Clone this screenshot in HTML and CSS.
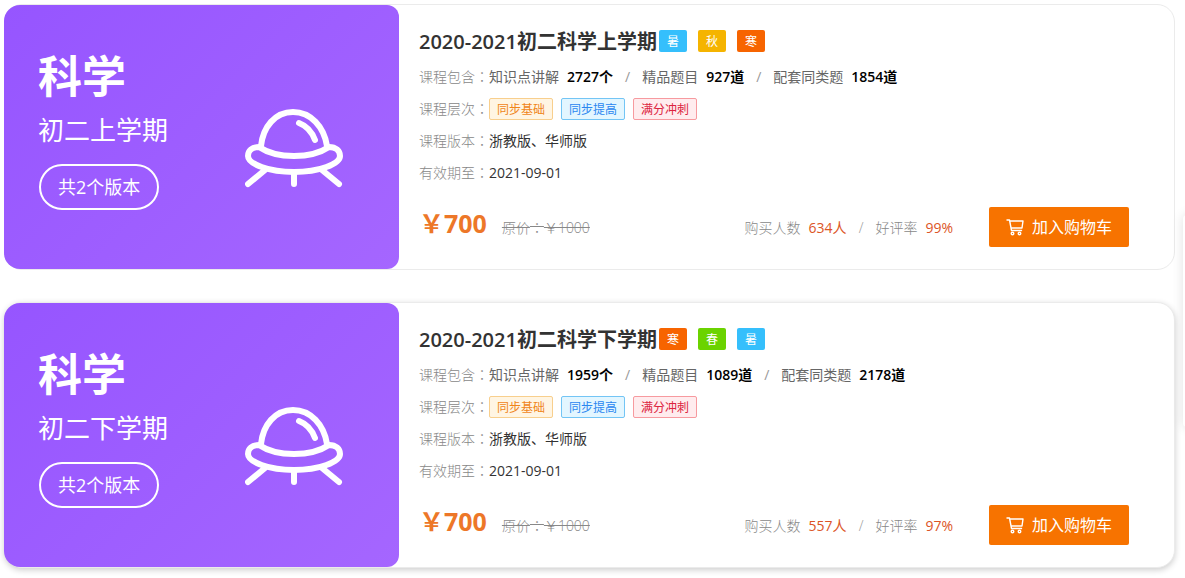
FILE: index.html
```html
<!DOCTYPE html>
<html lang="zh-CN">
<head>
<meta charset="utf-8">
<title>初二科学课程</title>
<link rel="stylesheet" href="styles.css">
</head>
<body>
<svg class="sprite" aria-hidden="true">
  <symbol id="ufo" viewBox="0 0 98 80">
    <g fill="none" stroke="currentColor" stroke-width="6" stroke-linecap="round" stroke-linejoin="round">
      <path d="M16 37C18 18 30 3 48 3S79 18 82 37"/>
      <path d="M14 38C32 50 66 50 84 38C91 38 95 42 95 47C95 55 74 63 49 63S3 55 3 47C3 42 7 38 14 38Z"/>
      <path d="M54 14C62 17 67 23 70 31M20 61L3 75M49 63V75M77 61L94 75"/>
    </g>
  </symbol>
  <symbol id="cart" viewBox="0 0 18 17">
    <g fill="none" stroke="currentColor" stroke-width="1.4" stroke-linecap="round" stroke-linejoin="round">
      <path d="M1 1H3.5L5.5 11.5H15.5M4 2H17L16 9H5.5"/>
      <circle cx="6.5" cy="14.5" r="1.3"/>
      <circle cx="13.5" cy="14.5" r="1.3"/>
    </g>
  </symbol>
</svg>
<main class="courses">
  <article class="card">
    <div class="cover">
      <div class="cover-text">
        <strong class="subject">科学</strong>
        <span class="term">初二上学期</span>
        <span class="versions">共2个版本</span>
      </div>
      <svg class="ufo" aria-hidden="true"><use href="#ufo"/></svg>
    </div>
    <div class="detail">
      <div class="heading">
        <h2><span class="years">2020-2021</span>初二科学上学期</h2>
        <div class="seasons"><span class="season summer">暑</span><span class="season autumn">秋</span><span class="season winter">寒</span></div>
      </div>
      <dl class="facts">
        <div class="fact"><dt>课程包含<i lang="zh-TW">：</i></dt><dd class="counts"><span>知识点讲解<b>2727个</b></span><em>/</em><span>精品题目<b>927道</b></span><em>/</em><span>配套同类题<b>1854道</b></span></dd></div>
        <div class="fact"><dt>课程层次<i lang="zh-TW">：</i></dt><dd class="levels"><span class="level basic">同步基础</span><span class="level improve">同步提高</span><span class="level sprint">满分冲刺</span></dd></div>
        <div class="fact"><dt>课程版本<i lang="zh-TW">：</i></dt><dd>浙教版、华师版</dd></div>
        <div class="fact"><dt>有效期至<i lang="zh-TW">：</i></dt><dd>2021-09-01</dd></div>
      </dl>
      <div class="purchase">
        <strong class="price">￥700</strong>
        <del>原价<i lang="zh-TW">：</i>￥1000</del>
        <div class="stats"><span>购买人数<b>634人</b></span><em>/</em><span>好评率<b>99%</b></span></div>
        <button class="add" type="button"><svg class="cart" aria-hidden="true"><use href="#cart"/></svg>加入购物车</button>
      </div>
    </div>
  </article>
  <article class="card raised">
    <div class="cover">
      <div class="cover-text">
        <strong class="subject">科学</strong>
        <span class="term">初二下学期</span>
        <span class="versions">共2个版本</span>
      </div>
      <svg class="ufo" aria-hidden="true"><use href="#ufo"/></svg>
    </div>
    <div class="detail">
      <div class="heading">
        <h2><span class="years">2020-2021</span>初二科学下学期</h2>
        <div class="seasons"><span class="season winter">寒</span><span class="season spring">春</span><span class="season summer">暑</span></div>
      </div>
      <dl class="facts">
        <div class="fact"><dt>课程包含<i lang="zh-TW">：</i></dt><dd class="counts"><span>知识点讲解<b>1959个</b></span><em>/</em><span>精品题目<b>1089道</b></span><em>/</em><span>配套同类题<b>2178道</b></span></dd></div>
        <div class="fact"><dt>课程层次<i lang="zh-TW">：</i></dt><dd class="levels"><span class="level basic">同步基础</span><span class="level improve">同步提高</span><span class="level sprint">满分冲刺</span></dd></div>
        <div class="fact"><dt>课程版本<i lang="zh-TW">：</i></dt><dd>浙教版、华师版</dd></div>
        <div class="fact"><dt>有效期至<i lang="zh-TW">：</i></dt><dd>2021-09-01</dd></div>
      </dl>
      <div class="purchase">
        <strong class="price">￥700</strong>
        <del>原价<i lang="zh-TW">：</i>￥1000</del>
        <div class="stats"><span>购买人数<b>557人</b></span><em>/</em><span>好评率<b>97%</b></span></div>
        <button class="add" type="button"><svg class="cart" aria-hidden="true"><use href="#cart"/></svg>加入购物车</button>
      </div>
    </div>
  </article>
</main>
<aside class="dock" aria-hidden="true"></aside>
</body>
</html>
```
FILE: styles.css
```css
* { box-sizing: border-box; }
body {
  margin: 0;
  background: #fff;
  color: #333;
  font: 14px/32px "Open Sans", "Noto Sans CJK SC", sans-serif;
  overflow: hidden;
}
.sprite { display: none; }
i, em { font-style: normal; }
i { font-family: "Noto Sans CJK TC", sans-serif; line-height: 1; }
.courses {
  display: flex;
  flex-direction: column;
  gap: 32px;
  padding: 4px 10px 10px 4px;
}
.card {
  display: flex;
  border: 1px solid #ebebeb;
  border-radius: 18px;
  background: #fff;
}
.raised { box-shadow: 0 2px 6px rgba(0, 0, 0, .2); }
.cover {
  display: flex;
  flex: 0 0 395px;
  align-items: center;
  justify-content: space-between;
  margin-left: -1px;
  padding: 0 56px 0 34px;
  border-radius: 16px 12px 12px 16px;
  background: linear-gradient(135deg, #9655ff, #a566ff);
  color: #fff;
}
.cover-text {
  display: flex;
  flex-direction: column;
  align-items: flex-start;
  padding-bottom: 18px;
}
.subject { margin-bottom: 2px; font-size: 44px; line-height: 60px; }
.term { font-size: 26px; line-height: 44px; }
.versions {
  margin: 12px 0 0 1px;
  padding: 0 17px;
  border: 2px solid #fff;
  border-radius: 23px;
  font-size: 18px;
  line-height: 42px;
}
.ufo { width: 98px; height: 80px; margin-top: 24px; }
.detail { flex: 1; padding: 20px 45px 22px 20px; }
.heading { display: flex; align-items: center; gap: 2px; }
h2 { margin: 0; padding-top: 2px; font-size: 20px; font-weight: 700; line-height: 30px; }
.years { font-weight: 600; }
.seasons { display: flex; gap: 11px; }
.season {
  width: 28px;
  padding-top: 1px;
  border-radius: 2px;
  color: #fff;
  font-size: 12px;
  line-height: 21px;
  text-align: center;
}
.summer { background: #35bffc; }
.autumn { background: #f5b400; }
.winter { background: #f76400; }
.spring { background: #6bd300; }
.facts { margin: 4px 0 0; }
.fact { display: flex; height: 32px; align-items: baseline; }
dt { color: #888; font-weight: 300; }
dd { margin: 0; }
.counts { display: flex; gap: 12px; color: #666; }
.counts b { margin-left: 8px; color: #000; font-weight: 600; }
.counts em, .stats em { color: #999; }
.levels { display: flex; gap: 8px; }
.level {
  padding: 1px 7px 0;
  border: 1px solid;
  border-radius: 2px;
  font-size: 12px;
  line-height: 19px;
}
.basic { border-color: #f8cf8d; background: #fff5e3; color: #f08519; }
.improve { border-color: #73c5f5; background: #e3f6ff; color: #2a86f0; }
.sprint { border-color: #f79a9f; background: #ffecee; color: #dc2440; }
.purchase { display: flex; align-items: center; margin-top: 18px; }
.price { margin-bottom: 8px; color: #ed7728; font-size: 25px; font-weight: 700; }
del { margin: 2px 0 0 15px; color: #888; font-weight: 300; }
.stats { display: flex; gap: 12px; margin: 2px 36px 0 auto; color: #888; font-weight: 300; }
.stats b { margin-left: 8px; color: #dc5526; font-weight: 400; }
.add {
  display: flex;
  align-items: center;
  justify-content: center;
  gap: 8px;
  width: 140px;
  height: 40px;
  padding: 0;
  border: 0;
  border-radius: 2px;
  background: #f77300;
  color: #fff;
  font: inherit;
  font-size: 16px;
}
.cart { width: 18px; height: 17px; }
.dock {
  position: absolute;
  top: 215px;
  left: calc(100% - 2px);
  width: 60px;
  height: 212px;
  border-radius: 4px;
  background: #fff;
  box-shadow: 0 0 12px rgba(0, 0, 0, .12);
}
```
